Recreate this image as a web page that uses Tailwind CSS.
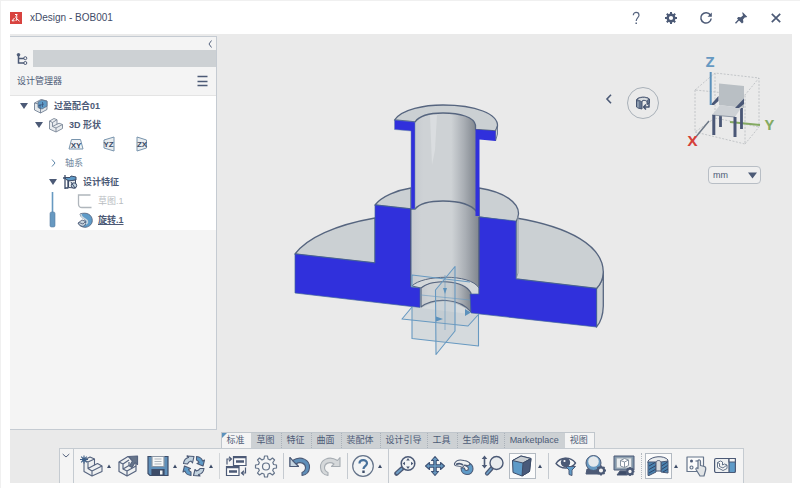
<!DOCTYPE html>
<html lang="zh-CN">
<head>
    <meta charset="UTF-8">
    <meta name="viewport" content="width=device-width, initial-scale=1.0">
    <title>xDesign - BOB001</title>
    <script src="https://cdn.jsdelivr.net/npm/@tailwindcss/browser@4"></script>
</head>
<body class="flex h-screen flex-col overflow-hidden border-t border-l border-[#f0f0f0] bg-white pb-[5px] pr-2 pl-[9px] font-['Liberation_Sans','Noto_Sans_CJK_SC',sans-serif] text-[9px] leading-3 text-[#4c5a76]">

    <!-- Title bar -->
    <header class="flex h-[33px] shrink-0 items-center pt-px">
        <svg class="h-3 w-3" viewBox="0 0 12 12">
            <rect width="12" height="12" fill="#d8433f"/>
            <path d="M5 2.500h2.200L5.500 5.500M7 4.500l-1 4.500M4.500 6L2 8.800h2.500M7 7l2.500 2.200" fill="none" stroke="#fff" stroke-width="1"/>
        </svg>
        <h1 class="ml-2 text-[10px] text-[#3f4c68]">xDesign - BOB001</h1>
        <div class="-mr-px ml-auto flex">
            <button class="flex w-[35px] justify-center" aria-label="Help">
                <svg class="h-4 w-4" viewBox="0 0 16 16" fill="none" stroke="#56647f" stroke-width="1.200"><path d="M5.300 5.200C5.300 1.500 11 1.500 11 5.200C11 7.500 8.200 7.800 8.200 11"/><path d="M8.200 12.400v1.600" stroke-width="1.500"/></svg>
            </button>
            <button class="flex w-[35px] justify-center" aria-label="Settings">
                <svg class="h-4 w-4" viewBox="0 0 16 16" fill="none" stroke="#4c5a76"><circle cx="8" cy="8" r="3.300" stroke-width="2.400"/><path d="M8 2v2.500M8 11.500V14M2 8h2.500M11.500 8H14M3.800 3.800l1.700 1.700M10.500 10.500l1.700 1.700M12.200 3.800l-1.700 1.700M5.500 10.500l-1.700 1.700" stroke-width="2"/></svg>
            </button>
            <button class="flex w-[35px] justify-center" aria-label="Refresh">
                <svg class="h-4 w-4" viewBox="0 0 16 16"><path d="M12.400 5A5.200 5.200 0 1 0 13.200 8.500" fill="none" stroke="#4c5a76" stroke-width="1.500"/><path d="M13.800 2.500v4.300H9.500z" fill="#4c5a76"/></svg>
            </button>
            <button class="flex w-[35px] justify-center" aria-label="Pin">
                <svg class="h-4 w-4" viewBox="0 0 16 16" fill="#4c5a76"><path d="M9.500 2l4.700 4.700-1.200.8-1-.2-2 2.200.4 2.700-1.400 1.200-5-5L5.200 7l2.700.3 2.200-2-.7-1.500z"/><path d="M6.500 9l-4 4.200" stroke="#4c5a76" stroke-width="1.300"/></svg>
            </button>
            <button class="flex w-[35px] justify-center" aria-label="Close">
                <svg class="h-4 w-4" viewBox="0 0 16 16"><path d="M3.800 3.800l8.400 8.400M12.200 3.800l-8.400 8.400" stroke="#4c5a76" stroke-width="1.700"/></svg>
            </button>
        </div>
    </header>

    <main class="flex min-h-0 flex-1 flex-col bg-[#eaeaea]">
        <div class="flex min-h-0 flex-1">
            <!-- Design manager -->
            <aside class="mt-[2px] flex w-[207px] shrink-0 flex-col border-t border-r border-b border-[#c5cbd2] bg-[#f4f4f4]">
                <div class="flex h-[13px] shrink-0 items-center justify-end pr-1">
                    <button aria-label="Collapse panel">
                        <svg class="h-2 w-1" viewBox="0 0 4 8"><path d="M3.500.5L1 4l2.500 3.500" fill="none" stroke="#56647f"/></svg>
                    </button>
                </div>
                <div class="flex h-[17px] shrink-0 bg-[#cdd1d4]">
                    <button class="flex w-[23px] items-center justify-center bg-[#f4f4f4]" aria-label="Tree">
                        <svg class="h-3 w-3" viewBox="0 0 12 12" fill="none" stroke="#4c5a76"><path d="M2.500 1v9H8M2.500 5.500H8" stroke-width="1.500"/><circle cx="2.500" cy="1.800" r="1.300" fill="#4c5a76"/><circle cx="9.300" cy="5.200" r="1.500"/><circle cx="9.300" cy="10" r="1.500"/></svg>
                    </button>
                </div>
                <div class="flex h-[29px] shrink-0 items-center justify-between border-b border-[#e4e4e4] pr-2 pl-[7px]">
                    <h2>设计管理器</h2>
                    <button aria-label="Menu">
                        <svg class="h-3 w-[11px]" viewBox="0 0 11 12"><path d="M.5 1.500h10M.5 6.500h10M.5 10.500h10" stroke="#4c5a76" stroke-width="1.300"/></svg>
                    </button>
                </div>
                <ul class="bg-white pb-px">
                    <li class="flex h-[19px] items-center gap-[5px] pl-[10px] font-bold">
                        <svg class="h-2 w-2" viewBox="0 0 8 8"><path d="M0 1h8L4 7z" fill="#4c5a76"/></svg>
                        <svg class="h-4 w-4" viewBox="0 0 16 16" stroke="#65748a" stroke-width=".8" stroke-linejoin="round"><path d="M1.500 5L8 1.500 14 3v8.500L7.500 15 1.500 12z" fill="#e4e8eb"/><path d="M1.500 5l6 1.500V15" fill="none"/><path d="M5 4l4-2 5 1.200v5L9 11 5 9.500z" fill="#5f9bc8"/><path d="M7 6v5M9.500 4v5M5 8l6-2" stroke="#3e577c"/></svg>
                        过盈配合01
                    </li>
                    <li class="flex h-[19px] items-center gap-[5px] pl-[25px] font-bold">
                        <svg class="h-2 w-2" viewBox="0 0 8 8"><path d="M0 1h8L4 7z" fill="#4c5a76"/></svg>
                        <svg class="h-4 w-4" viewBox="0 0 16 16" stroke="#7b8797" stroke-width=".9" stroke-linejoin="round"><path d="M1.500 4L6 1.500l3 1.200v4.500l2-1 3.500 1.300v4L8 15l-6.500-3z" fill="#e9ecee"/><path d="M1.500 4l3 1.500v4L8 11l6.500-3.500M8 11v4M4.500 5.500L9 2.700M4.500 9.500L9 7.200" fill="none"/></svg>
                        3D 形状
                    </li>
                    <li class="flex h-[19px] items-center gap-[17px] pl-[58px]">
                        <svg class="h-4 w-4" viewBox="0 0 16 16"><path d="M3.500 3.500h9L15 13H1z" fill="#f2f4f5" stroke="#7894ad"/><text x="8" y="11.500" text-anchor="middle" font-size="8" font-weight="700" fill="#3d4c68">XY</text></svg>
                        <svg class="h-4 w-4" viewBox="0 0 16 16"><path d="M3 4l10-3v14l-10-3z" fill="#e9edef" stroke="#7894ad"/><text x="7.500" y="11" text-anchor="middle" font-size="8" font-weight="700" fill="#3d4c68">YZ</text></svg>
                        <svg class="h-4 w-4" viewBox="0 0 16 16"><path d="M3 1l9.500 3v8l-9.500 3z" fill="#e9edef" stroke="#7894ad"/><text x="8" y="11" text-anchor="middle" font-size="8" font-weight="700" fill="#3d4c68">ZX</text></svg>
                    </li>
                    <li class="flex h-[19px] items-center gap-2 pl-[39px] text-[#71889e]">
                        <svg class="h-2 w-2" viewBox="0 0 8 8"><path d="M3 .5L6 4 3 7.500" fill="none" stroke="#5e86a8"/></svg>
                        轴系
                    </li>
                    <li class="flex h-[19px] items-center gap-[5px] pl-[39px] font-bold">
                        <svg class="h-2 w-2" viewBox="0 0 8 8"><path d="M0 1h8L4 7z" fill="#4c5a76"/></svg>
                        <svg class="h-4 w-4" viewBox="0 0 16 16" stroke="#3d4c68" stroke-linejoin="round"><path d="M3 1v14M6 3v11H3M1 4h3" fill="none" stroke-width="1.300"/><path d="M3 3.500h5l1-1.500 5 1v3l-6 1-4-1.500z" fill="#5f9bc8"/><path d="M6.500 7l7-1v8l-7-.5z" fill="#e9edef"/><circle cx="12" cy="11.500" r="2.700" fill="#c5d5e1"/><path d="M9 8l4 6" fill="none"/></svg>
                        设计特征
                    </li>
                    <li class="flex pl-[39px]">
                        <svg class="h-[38px] w-2" viewBox="0 0 8 38"><path d="M3.500 1v21" stroke="#6799c1" stroke-width="1.600"/><rect x="1" y="21" width="5" height="15" rx="1.500" fill="#6799c1" stroke="#587da2" stroke-width=".6"/></svg>
                        <ul class="ml-5">
                            <li class="flex h-[19px] items-center gap-[5px] text-[#b8bcc1]">
                                <svg class="h-4 w-4" viewBox="0 0 16 16"><path d="M13.500 2H1.500v9q0 3.500 3.500 3.500h9.500" fill="none" stroke="#b0b6bc" stroke-width="1.300"/></svg>
                                草图.1
                            </li>
                            <li class="flex h-[19px] items-center gap-[5px] font-bold">
                                <svg class="h-4 w-4" viewBox="0 0 16 16" stroke="#4c5a76" stroke-width=".8"><path d="M3 2C10-.5 15.300 3 15.300 8.500 15.300 13 11 15.300 8 15.300 5 15.300 2 13.500 1 11l4 .5c3 .5 4-1.500 3-3.500C7 6.500 3 5 3 2z" fill="#5f9bc8"/><path d="M1 11l4-3 3 1 1 3-3 2.500-3-1z" fill="#c7d4de"/><path d="M4 2c0 3 2 4 4 5s4 3 1 5" fill="none" stroke="#c7d4de" stroke-width="1.600"/><path d="M2 10.500l4 1.500 2-2" fill="none"/></svg>
                                <a href="#" class="underline">旋转.1</a>
                            </li>
                        </ul>
                    </li>
                </ul>
            </aside>

            <!-- 3D viewport -->
            <section class="flex min-w-0 flex-1 items-start pr-[14px]">
                <svg class="mt-[66px] ml-[71px] h-[256px] w-[316px] shrink-0" viewBox="288 100 316 256" stroke-linejoin="round">
                    <defs>
                        <linearGradient id="bore" x1="0" x2="1" y1="0" y2="0">
                            <stop offset="0" stop-color="#c5cacf"/>
                            <stop offset=".15" stop-color="#ced2d5"/>
                            <stop offset=".6" stop-color="#ced2d5"/>
                            <stop offset=".8" stop-color="#aaafb5"/>
                            <stop offset="1" stop-color="#80868e"/>
                        </linearGradient>
                    </defs>
                    <!-- base plate -->
                    <g fill="#cbd0d3" stroke="#56657f" stroke-width="1.300">
                        <path d="M295 254C307 238 335 225 375 218V263z"/>
                        <path d="M596.500 288.500C600 285 603 280 603.300 272V306C603 317 600 323 596.500 327z"/>
                        <path d="M516 218C570 227 603 246 603.300 272C603 280 600 285 596.500 288.500L516 279z"/>
                        <!-- hub -->
                        <path d="M375 205C382 196 398 190 411 188V209z"/>
                        <path d="M479 188C505 192 519 203 518.500 214C518 218 517 220 516 222L479 217z"/>
                        <path d="M518 217V273L516 279" fill="none" stroke="#929aa5" stroke-width="1"/>
                    </g>
                    <path d="M411 195H479V295L471 292V312Q447 293 421 308V287L411 286z" fill="url(#bore)"/>
                    <path d="M412 286C422 275 470 273 479 288V295H471C466 283 436 277 421 288z" fill="#d4d8da" stroke="#56657f"/>
                    <path d="M421 288C432 279 463 279 471 293V312C460 298 434 297 421 307z" fill="url(#bore)" stroke="#56657f" stroke-width="1.200"/>
                    <!-- sleeve -->
                    <path d="M415 122C420 115 430 113 443 113C460 113 474 117 476 125V212C470 203 457 201 443 201C430 201 420 203 414 209z" fill="url(#bore)"/>
                    <path d="M430 115h7l-2 35-3 15z" fill="#dadde0"/>
                    <path d="M411 209H415C420 203 430 201 443 201C457 201 471 204 477 212" fill="none" stroke="#56657f" stroke-width="1.400"/>
                    <path d="M394.500 120C402 109 425 105 443 105C476 105 498 114 497.500 126L495.500 131 475.500 129.500V125C474 117 460 113 443 113C430 113 419 116 415 122z" fill="#cbd0d3" stroke="#56657f" stroke-width="1.300"/>
                    <path d="M497.500 126V134L495.500 141V131z" fill="#cbd0d3" stroke="#56657f" stroke-width=".8"/>
                    <!-- section faces -->
                    <path d="M394.500 120L415 122V209H411V131L394.500 129.500z" fill="#3030dc" stroke="#6a8aa5" stroke-width=".5"/>
                    <path d="M475.500 129.500L495.500 131V141L479.500 139.500V216H475.500z" fill="#3030dc"/>
                    <path d="M375 205L411 209V287L420 288V307.500L295 293V254L375 263z" fill="#3030dc" stroke="#42659c" stroke-width=".7"/>
                    <path d="M479 217L516 221V279L596.500 288.500V327L471 313 470 294H479z" fill="#3030dc" stroke="#42659c" stroke-width=".7"/>
                    <path d="M410.700 209V286M479 217V286" stroke="#4c567a"/>
                    <!-- origin planes -->
                    <g fill="#9fafbb" fill-opacity=".18" stroke="#6799c1" stroke-width="1.100">
                        <path d="M412 307V338.500L478.500 346V314L471 313C459 299 434 297 421 307.500z" stroke="none" fill-opacity=".28"/>
                        <path d="M412 287V275L470 282M412 307V338.500L478.500 346V314" fill="none"/>
                        <path d="M412 307L402 319 468 326 478 315"/>
                        <path d="M435.500 290L455 266.500V331L436 354.500z"/>
                        <path d="M421 295L470 300M445 275V330" stroke-width=".6" fill="none"/>
                    </g>
                    <path d="M436 316.500L443 319 436 321.500zM465 309L471 312.500 465 316zM443 288h4l-2 6z" fill="#5b91bc"/>
                </svg>

                <div class="ml-auto flex items-start">
                    <button class="mt-[59px] flex h-3 w-2 items-center justify-center" aria-label="Previous">
                        <svg class="h-[10px] w-2" viewBox="0 0 8 10"><path d="M6 .8L2 5l4 4.200" fill="none" stroke="#4c5a76" stroke-width="1.600"/></svg>
                    </button>
                    <button class="mt-[53px] ml-[14px] flex h-8 w-8 items-center justify-center rounded-full border border-[#a9b1b9]" aria-label="Section view">
                        <svg class="h-4 w-4" viewBox="0 0 16 16" stroke="#465470" stroke-linejoin="round"><path d="M1.500 4.500C3 2 11 1 14.500 4v4L12 9.500V6c-2-1-4-1-5 .5V14l-4-1-1.500-1z" fill="#65758e"/><path d="M2 4.500c2-2.500 9-3 12-.5l-2.500 2c-2-1-4-1-5 .5z" fill="#d9dde0" stroke-width=".8"/><path d="M3 6.500v6" stroke="#b3c2cf"/><path d="M14 8v4H9M11 9.500L8.500 12l2.500 2.500" fill="none" stroke-width="1.500"/></svg>
                    </button>
                    <div class="ml-[21px] flex w-[98px] flex-col items-end pt-[14px]">
                        <svg class="h-[104px] w-[98px]" viewBox="680 48 98 104">
                            <path d="M695 90L715 73 759 78 745 95zM695 90V132L745 144V95M745 144L759 127V78M715 73V118L695 132M715 118L759 127" fill="none" stroke="#b7bbbf" stroke-width=".8" stroke-dasharray="2 1.500"/>
                            <path d="M709 121L695 138" stroke="#6d7887" stroke-width="1.500"/>
                            <path d="M730 122L760 125" stroke="#84aa62" stroke-width="2"/>
                            <path d="M720.500 114V127M741.500 108V129" stroke="#4a5776" stroke-width="2.800"/>
                            <path d="M719 83.500L744 86V108L719 105z" fill="#b9bfc4"/>
                            <path d="M720 105L741 108 735 117 712 115z" fill="#cdd1d5"/>
                            <path d="M712 115L735 117" stroke="#929ba8"/>
                            <path d="M713.800 115V135M735 117V137" stroke="#4a5776" stroke-width="3"/>
                            <path d="M710.500 105L718.500 96V101L714 105zM735 108L744 98.500V104L739 108z" fill="#4a5776"/>
                            <path d="M710.700 72V105" stroke="#5b91bc" stroke-width="2"/>
                            <g font-family="Open Sans" font-weight="700" font-size="15" text-anchor="middle">
                                <text x="710" y="66.500" fill="#6699c2">Z</text>
                                <text x="769.500" y="130" fill="#84aa62">Y</text>
                                <text x="692.500" y="146" fill="#d5403a">X</text>
                            </g>
                        </svg>
                        <label class="relative mt-[14px] mr-[17px] block">
                            <select aria-label="Units" class="block h-[18px] w-[53px] appearance-none rounded-sm border border-[#b8bec5] bg-[#efefef] pl-1 text-[9px]">
                                <option>mm</option>
                            </select>
                            <svg class="pointer-events-none absolute top-[6px] right-1 h-[7px] w-[9px]" viewBox="0 0 9 7"><path d="M0 .5h9L4.500 6.500z" fill="#4c5a76"/></svg>
                        </label>
                    </div>
                </div>
            </section>
        </div>

        <!-- Action bar -->
        <footer class="mt-[2px] flex shrink-0 justify-center">
            <div>
                <nav class="ml-[162px] flex h-4 w-max border-t border-[#c0c6cc] bg-[#cdd1d4] leading-[15px]">
                    <a href="#" class="relative border-l border-[#c0c6cc] bg-[#f4f4f4] pr-[6px] pl-[5px]">标准<svg class="absolute top-0 left-0 h-[5px] w-[5px]" viewBox="0 0 5 5"><path d="M0 0h5L0 5z" fill="#5b91bc"/></svg></a>
                    <a href="#" class="px-[6px]">草图</a>
                    <a href="#" class="border-l border-dotted border-[#aab1b9] pr-[6px] pl-[5px]">特征</a>
                    <a href="#" class="border-l border-dotted border-[#aab1b9] pr-[6px] pl-[5px]">曲面</a>
                    <a href="#" class="border-l border-dotted border-[#aab1b9] pr-[6px] pl-[5px]">装配体</a>
                    <a href="#" class="border-l border-dotted border-[#aab1b9] px-[5px]">设计引导</a>
                    <a href="#" class="border-l border-dotted border-[#aab1b9] pr-[6px] pl-[5px]">工具</a>
                    <a href="#" class="border-l border-dotted border-[#aab1b9] px-[5px]">生命周期</a>
                    <a href="#" class="border-l border-dotted border-[#aab1b9] pr-[6px] pl-[5px]">Marketplace</a>
                    <a href="#" class="border-r border-[#c0c6cc] bg-[#f4f4f4] pr-[6px] pl-[5px]">视图</a>
                </nav>
                <div class="flex h-[35px] items-stretch border-t border-r border-l border-[#c5cbd1] bg-[#f4f4f4] pr-[3px]">
                    <button class="mr-[3px] flex w-[14px] justify-center border-r border-[#c5cbd1] pt-1" aria-label="Collapse bar">
                        <svg class="h-[6px] w-2" viewBox="0 0 8 6"><path d="M.7 1L4 4l3.300-3" fill="none" stroke="#56647f"/></svg>
                    </button>
                    <button class="flex w-[30px] items-center justify-center" aria-label="New">
                        <svg class="h-6 w-6" viewBox="0 0 24 24" stroke="#56647f" stroke-width="1.100" stroke-linejoin="round"><path d="M4 6l6-3 4.500 2v6l3-1.500L22 12v5.500L12 22l-8-4.500z" fill="#eef0f1"/><path d="M4 6l4 2v6.500L12 17l10-5M12 17v5M8 8l6.500-3M8 14.500l6.500-3.500" fill="none"/><circle cx="4" cy="5.500" r="2" fill="#4c7aa5" stroke="none"/><path d="M4 1.500v8M0 5.500h8M1.200 2.700l5.600 5.600M6.800 2.700L1.200 8.300" stroke="#3e5f87"/></svg>
                    </button>
                    <button class="flex w-[6px] items-center" aria-label="New options"><svg class="h-1 w-1" viewBox="0 0 4 4"><path d="M0 4h4L2 .5z" fill="#3d4c68"/></svg></button>
                    <button class="flex w-[30px] items-center justify-center" aria-label="Open">
                        <svg class="h-6 w-6" viewBox="0 0 24 24" stroke="#56647f" stroke-width="1.200" stroke-linejoin="round"><path d="M3 8l9-5.500 8 3V17l-9 5-8-4.500z" fill="#eef0f1"/><path d="M3 8l4 2v5l4 2 9-5M11 17v5M7 10l6-4M7 15l6-3.500V8" fill="none"/><path d="M12.500 2.500L21.500 2v8.500l-2.500-2-3 5-2.500-1.500 3-5z" fill="#65748a"/></svg>
                    </button>
                    <button class="flex w-[30px] items-center justify-center" aria-label="Save">
                        <svg class="h-6 w-6" viewBox="0 0 24 24" stroke="#3d4c68" stroke-width="1.200"><path d="M2 2.500h20v19H4l-2-2z" fill="#5f8fb9"/><path d="M6 2.500h12v10H6z" fill="#f6f7f7" stroke="#8c98a6"/><path d="M8.500 5h7M8.500 7.500h7M8.500 10h7" stroke="#adb5bd"/><path d="M6 15.500h12v6H6z" fill="#3d4c68"/><path d="M14 16.500h2.500v4H14z" fill="#f0f2f3" stroke="none"/></svg>
                    </button>
                    <button class="flex w-[6px] items-center" aria-label="Save options"><svg class="h-1 w-1" viewBox="0 0 4 4"><path d="M0 4h4L2 .5z" fill="#3d4c68"/></svg></button>
                    <button class="flex w-[30px] items-center justify-center" aria-label="Update">
                        <svg class="h-6 w-6" viewBox="0 0 24 24" stroke="#4c5a76" stroke-width="1.100" stroke-linejoin="round"><path d="M1.500 9.500C2 6 4 4 6.500 3.500L5 2l7 .5L10.500 9 9 7C7 7.500 6 8.500 5.500 10z" fill="#c3d3df"/><path d="M14.500 2.500c3.500.5 5.500 2 6 4.500l2-1-1.500 6-6-2.500 2-1c-.5-1.500-1.500-2-2.500-2.500z" fill="#5f9bc8"/><path d="M22 14.500c-.5 3.500-2.500 5.500-5.500 6l1.500 1.500-6.500-.5 1.500-6 1.500 1.500c2-.5 3-1.500 3.500-2.500z" fill="#c3d3df"/><path d="M9 21.500c-3.500-.5-5.500-2-6-4.500l-2 1 1.500-6 6 2.500-2 1c.5 1.500 1.500 2 2.500 2.500z" fill="#5f9bc8"/></svg>
                    </button>
                    <button class="flex w-[6px] items-center" aria-label="Update options"><svg class="h-1 w-1" viewBox="0 0 4 4"><path d="M0 4h4L2 .5z" fill="#3d4c68"/></svg></button>
                    <span class="my-1 mr-px ml-1 w-px bg-[#d3d6d9]"></span>
                    <button class="flex w-[30px] items-center justify-center" aria-label="Switch">
                        <svg class="h-6 w-6" viewBox="0 0 24 24" stroke="#4c5a76" stroke-width="1.200"><path d="M9.500 2.500H22v9H9.500zM2.500 12.500H15v9H2.500z" fill="#fbfbfb"/><path d="M9.500 3.500H22M2.500 13.500H15" stroke-width="1.600"/><path d="M12 7.500h8M5 17.500h8" stroke-width="2.600"/><path d="M3 10.500V5h3.500M5 2.700L7.500 5 5 7.300M21.500 13.500V19H18M20 16.700L17.500 19l2.500 2.300" fill="none"/></svg>
                    </button>
                    <button class="flex w-[30px] items-center justify-center" aria-label="Options">
                        <svg class="h-6 w-6" viewBox="0 0 24 24" fill="#f5f6f6" stroke="#65748a" stroke-width="1.200" stroke-linejoin="round"><path d="M10.500 2h3l.5 3 2 .9 2.500-1.900L20.600 6l-1.800 2.500.8 2L22.500 11v3l-3 .5-.8 2L20.500 19l-2 2-2.500-1.800-2 .8-.5 3h-3l-.5-3-2-.8L5.500 21l-2-2 1.800-2.500-.8-2-3-.5v-3l3-.5.8-2L3.500 6l2-2L8 5.900l2-.9z"/><circle cx="12" cy="12.500" r="3.500"/></svg>
                    </button>
                    <span class="my-1 mr-px ml-[2px] w-px bg-[#c5cad0]"></span>
                    <button class="flex w-[30px] items-center justify-center" aria-label="Undo">
                        <svg class="h-6 w-6" viewBox="0 0 24 24" stroke="#4c5a76" stroke-width="1.100" stroke-linejoin="round"><path d="M2 3.500l2.500 3C13 1 22 6 21.500 13.500c-.3 5-4 7.500-7.500 8v-3c2-.8 3.500-2.500 3.500-5 0-4-5-6.500-9.500-3.500l2.500 2.500H2z" fill="#5f8fb9"/><path d="M2 3.500l2.500 3 3.500 3.500 2.500 2.500H2z" fill="#c7d6e2"/></svg>
                    </button>
                    <button class="flex w-[30px] items-center justify-center" aria-label="Redo">
                        <svg class="h-6 w-6" viewBox="0 0 24 24" stroke="#a7adb3" stroke-width="1.100" stroke-linejoin="round"><path d="M22 3.500l-2.500 3C11 1 2 6 2.500 13.500c.3 5 4 7.500 7.500 8v-3c-2-.8-3.500-2.500-3.500-5 0-4 5-6.500 9.500-3.500l-2.500 2.500H22z" fill="#d5d8da"/></svg>
                    </button>
                    <span class="my-1 mr-px ml-[2px] w-px bg-[#c5cad0]"></span>
                    <button class="flex w-[29px] items-center justify-center" aria-label="Assistance">
                        <svg class="h-6 w-6" viewBox="0 0 24 24" fill="none"><circle cx="12" cy="12" r="10.300" fill="#f2f4f5" stroke="#65748a" stroke-width="1.200"/><path d="M8.500 9.500C8.500 5 16 5 16 9.300c0 2.700-3.500 3-3.500 5.700" stroke="#46709b" stroke-width="2.200"/><path d="M12.500 16.500v2.500" stroke="#3d4c68" stroke-width="2.400"/></svg>
                    </button>
                    <button class="flex w-[6px] items-center" aria-label="Assistance options"><svg class="h-1 w-1" viewBox="0 0 4 4"><path d="M0 4h4L2 .5z" fill="#3d4c68"/></svg></button>
                    <span class="mr-[3px] ml-1 w-px bg-[#c5cad0]"></span>
                    <button class="flex w-[29px] items-center justify-center" aria-label="Fit all">
                        <svg class="h-6 w-6" viewBox="0 0 24 24" stroke="#4c5a76"><path d="M8 14.500l-5.500 5" stroke-width="4.500" stroke-linecap="round"/><path d="M7.500 15L3 19" stroke="#6fa0c8" stroke-width="2" stroke-linecap="round"/><circle cx="14" cy="9.500" r="6.800" fill="#f2f4f5" stroke-width="1.500"/><path d="M14 4l1.800 2.500h-3.600zM14 15l1.800-2.500h-3.600zM8.500 9.500L11 7.700v3.600zM19.500 9.500L17 7.700v3.600z" fill="#4c5a76" stroke="none"/></svg>
                    </button>
                    <button class="flex w-[29px] items-center justify-center" aria-label="Pan">
                        <svg class="h-6 w-6" viewBox="0 0 24 24" fill="#6799c1" stroke="#3d5275" stroke-width="1.100" stroke-linejoin="round"><path d="M12 2.500l3.500 4h-2.300v4.300h4.300V8.500l4 3.500-4 3.500v-2.300h-4.300v4.300h2.300l-3.500 4-3.500-4h2.300v-4.300H6.500v2.300L2.500 12l4-3.500v2.300h4.300V6.500H8.500z"/></svg>
                    </button>
                    <button class="flex w-[29px] items-center justify-center" aria-label="Rotate">
                        <svg class="h-6 w-6" viewBox="0 0 24 24" stroke="#4c5a76" stroke-width="1.100" stroke-linejoin="round"><path d="M9 14c0 9 12 8 12 1 0-3-1.500-5-4-6l-5 2 3 1.500c2 1 2 4-.5 4-1.500 0-2-1-2-2.500z" fill="#5f9bc8"/><path d="M2.500 9.500C4 6.500 8 5.500 12 6.500c3 .5 5.500 1.500 6 3.500-1 2-4 1.500-5.500 1l-2 2.500c-2-1-3-1.500-5-1.500C3.500 12 2 11 2.500 9.500z" fill="#eff1f2"/><path d="M4 10.500c2-1 5-1 7 .5" fill="none" stroke-width="1.800"/></svg>
                    </button>
                    <button class="flex w-[29px] items-center justify-center" aria-label="Zoom">
                        <svg class="h-6 w-6" viewBox="0 0 24 24" stroke="#4c5a76"><path d="M10.500 14.500L6 19.500" stroke-width="4.200" stroke-linecap="round"/><path d="M10 15l-4 4.500" stroke="#6fa0c8" stroke-width="1.800" stroke-linecap="round"/><circle cx="15.500" cy="9" r="6.500" fill="#e9ecee" stroke-width="1.400"/><path d="M3.500 4v8.500" stroke-width="1.600"/><path d="M3.500 1.500L6.300 5H.7zM3.500 14.500L6.300 11H.7z" fill="#4c5a76" stroke="none"/></svg>
                    </button>
                    <button class="my-1 ml-px flex w-[27px] items-center justify-center border border-[#b3bac2] bg-[#fbfbfb]" aria-label="Shading">
                        <svg class="h-6 w-6" viewBox="0 0 24 24" stroke="#3d4c68" stroke-linejoin="round"><path d="M2.500 6.500L11 2l10 2.500-1.500 13L12 22 3 18.500z" fill="#5f9bc8"/><path d="M2.500 6.500L11 2l10 2.500L13 9z" fill="#c9ced2"/><path d="M13 9l8-4.500-1.500 13L12 22z" fill="#495a7a"/></svg>
                    </button>
                    <button class="ml-[2px] flex w-[6px] items-center" aria-label="Shading options"><svg class="h-1 w-1" viewBox="0 0 4 4"><path d="M0 4h4L2 .5z" fill="#3d4c68"/></svg></button>
                    <span class="my-1 mr-[3px] ml-1 w-px bg-[#c5cad0]"></span>
                    <button class="flex w-[29px] items-center justify-center" aria-label="Visibility">
                        <svg class="h-6 w-6" viewBox="0 0 24 24" stroke="#4c5a76" stroke-width="1.400" stroke-linejoin="round"><path d="M2 9.500C6 3 16 2 21.500 9c-4 6-14 7-19.500.500z" fill="#f6f7f7"/><circle cx="11.500" cy="8.500" r="4" fill="#4c5a76"/><circle cx="10.500" cy="7" r="1.100" fill="#fff" stroke="none"/><path d="M11.500 12.500h10L18 16v5.500l-3-1V16z" fill="#5f9bc8" stroke-width="1"/></svg>
                    </button>
                    <button class="flex w-[29px] items-center justify-center" aria-label="Ambience">
                        <svg class="h-6 w-6" viewBox="0 0 24 24" stroke="#4c5a76"><path d="M4 15h13l2 5H3z" fill="#4c5a76"/><circle cx="10.500" cy="9" r="7.500" fill="#6799c1"/><circle cx="10.500" cy="7.500" r="5.300" fill="#e5e9ec" stroke="none"/><circle cx="18" cy="16.500" r="3.200" fill="#f4f4f4" stroke-width="2.300"/><path d="M18 11.500v2M18 19.500v2M13 16.500h2M21 16.500h2M14.500 13l1.300 1.300M20.200 18.700l1.300 1.300M21.500 13l-1.300 1.300M15.800 18.700L14.500 20" stroke-width="1.800"/></svg>
                    </button>
                    <button class="flex w-[29px] items-center justify-center" aria-label="Display settings">
                        <svg class="h-6 w-6" viewBox="0 0 24 24" stroke="#4c5a76"><path d="M2 2h20v14H2z" fill="#8298ac"/><path d="M4.500 4h15v10h-15z" fill="#e9edef" stroke="#a2adb7"/><path d="M8.500 6.500l4-2 4 1.500v5.500l-4 2-4-1.500zM8.500 6.500l4 1.500v5.500M12.500 8l4-2" fill="#fff" stroke="#8794a1"/><path d="M8 17h6l1 4H5z" fill="#3d4c68"/><circle cx="18" cy="17.500" r="2.800" fill="#f4f4f4" stroke-width="2.300"/><path d="M18 13v2M18 20v2M13.500 17.500h2M20.500 17.500h2M15 14.500l1 1M20 19.500l1.300 1.300M21.200 14.300l-1.200 1.200M16 19.500l-1.300 1.300" stroke-width="1.700"/></svg>
                    </button>
                    <span class="my-1 mr-[3px] ml-[2px] border-l border-dotted border-[#b3b9c0]"></span>
                    <button class="my-1 flex w-[27px] items-center justify-center border border-[#b3bac2] bg-[#fbfbfb]" aria-label="Section">
                        <svg class="h-6 w-6" viewBox="0 0 24 24" stroke="#4c5a76" stroke-linejoin="round"><path d="M2 7C6 2 18 1 22 6l-1 3H2z" fill="#e9ecee"/><path d="M2 8h8v10l-7 3.500H2zM15 8l7-1v12l-7-1z" fill="#4b83b0"/><path d="M3 12l6-3.500M3 15.500l7-4M3 19l7-4M15.500 12l6-4M15.500 15.500l6-4M17 18l5-3" stroke="#2f4568"/><path d="M10 8c1-2 4-2 5 0v9h-5z" fill="#d5d9dc"/></svg>
                    </button>
                    <button class="ml-[2px] flex w-[6px] items-center" aria-label="Section options"><svg class="h-1 w-1" viewBox="0 0 4 4"><path d="M0 4h4L2 .5z" fill="#3d4c68"/></svg></button>
                    <button class="ml-[2px] flex w-[29px] items-center justify-center" aria-label="Touch mode">
                        <svg class="h-6 w-6" viewBox="0 0 24 24" fill="#fbfbfb" stroke="#65748a" stroke-width="1.200" stroke-linejoin="round"><path d="M3 3h16.500v14.500H3z"/><circle cx="7.500" cy="7" r="1.500" fill="#4c5a76" stroke="none"/><circle cx="7.500" cy="13.500" r="1.500"/><path d="M11.500 7H14"/><path d="M14 6.500c1-1 2.500-.5 2.500 1v4l4 1c1.500.500 1.500 2 1 4l-1.500 5.500h-4L12 15.500c-.5-1.500 1-2 2-1z" fill="#e1e4e6"/></svg>
                    </button>
                    <button class="flex w-[29px] items-center justify-center" aria-label="Compare">
                        <svg class="h-6 w-6" viewBox="0 0 24 24" stroke="#4c5a76" stroke-width="1.200" stroke-linejoin="round"><rect x="1.600" y="4.500" width="20.800" height="14" rx="1.500" fill="#eef0f1"/><path d="M16 4.500h5q1.400 0 1.400 1.500v11q0 1.500-1.400 1.500h-5z" fill="#5f9bc8"/><path d="M16 4.500h6.400V8H16z" fill="#f4f4f4"/><path d="M4.500 8.500l3-1.500 2 1v3l2-1 2.500 1v3.500l-4 2-5.500-3zM4.500 8.500l2 1v3l3.500 1.500 4-3" fill="#fbfbfb" stroke="#65748a" stroke-width="1"/></svg>
                    </button>
                </div>
            </div>
        </footer>
    </main>

</body>
</html>
